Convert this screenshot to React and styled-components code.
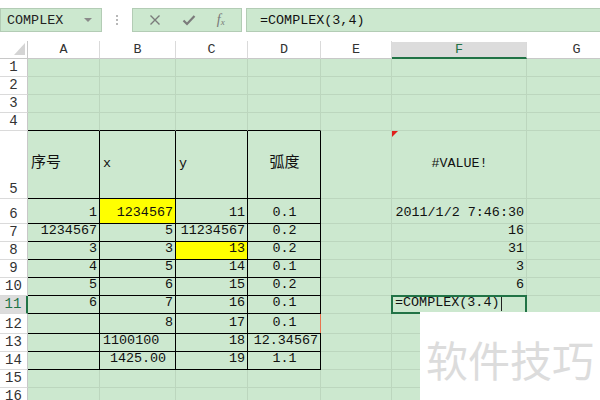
import styled, { createGlobalStyle } from "styled-components";

const GlobalStyle = createGlobalStyle`
  html, body {
    margin: 0;
    padding: 0;
    background: #ffffff;
    overflow: hidden;
  }
`;

const GREEN = "#cce8cf";
const GRID = "#bcd6be";
const HEAD_LINE = "#dadada";
const ACCENT = "#217346";
const FONT = `"Liberation Mono", "Noto Sans CJK SC", monospace`;

const Page = styled.div`
  position: relative;
  width: 600px;
  height: 400px;
  overflow: hidden;
  font-family: ${FONT};
  font-size: 13.4px;
  color: #111;
`;

const Toolbar = styled.div`
  display: flex;
  align-items: flex-start;
  height: 41px;
  padding-top: 8px;
  box-sizing: border-box;
  background: #fff;
`;

const Box = styled.div`
  display: flex;
  align-items: center;
  height: 24px;
  box-sizing: border-box;
  background: ${GREEN};
  border: 1px solid #b3ccb5;
`;

const NameBox = styled(Box)`
  width: 102px;
  padding: 0 6px;
  justify-content: space-between;
  color: #222;
`;

const Caret = styled.span`
  width: 0;
  height: 0;
  border-left: 4px solid transparent;
  border-right: 4px solid transparent;
  border-top: 4px solid #8a8a8a;
  margin-right: 3px;
`;

const Dots = styled.div`
  width: 30px;
  height: 24px;
  display: flex;
  flex-direction: column;
  align-items: center;
  justify-content: center;
  gap: 2px;
  span {
    width: 2px;
    height: 2px;
    background: #b8b8b8;
  }
`;

const FxBox = styled(Box)`
  width: 110px;
  justify-content: space-around;
  padding: 0 6px;
  color: #7b7b7b;
`;

const Fx = styled.span`
  font-family: "Liberation Serif", serif;
  font-style: italic;
  font-size: 14px;
  color: #777;
  sub {
    font-size: 9px;
    vertical-align: -1px;
  }
`;

const FormulaBox = styled(Box)`
  flex: 1;
  margin-left: 4px;
  margin-right: -2px;
  padding-left: 13px;
  color: #111;
`;

const Sheet = styled.div`
  display: grid;
  grid-template-columns: 28px 72px 76px 72px 73px 71px 135px 100px;
  grid-template-rows: 18px ${(p) => p.$rows};
`;

const Corner = styled.div`
  position: relative;
  border-right: 1px solid #c8c8c8;
  border-bottom: 1px solid #c8c8c8;
  box-sizing: border-box;
  background: #fff;
  &::after {
    content: "";
    position: absolute;
    right: 2px;
    bottom: 3px;
    border-left: 11px solid transparent;
    border-bottom: 12px solid #d4d4d4;
  }
`;

const ColHead = styled.div`
  display: flex;
  align-items: center;
  justify-content: center;
  box-sizing: border-box;
  background: ${(p) => (p.$active ? "#dcdcdc" : "#fff")};
  color: ${(p) => (p.$active ? ACCENT : "#333")};
  border-right: 1px solid ${HEAD_LINE};
  border-bottom: ${(p) => (p.$active ? `2px solid ${ACCENT}` : "1px solid #c8c8c8")};
  margin-top: ${(p) => (p.$active ? "1px" : "0")};
`;

const RowHead = styled.div`
  display: flex;
  align-items: flex-end;
  justify-content: center;
  box-sizing: border-box;
  padding-bottom: 1px;
  line-height: 16px;
  font-size: 14px;
  background: ${(p) => (p.$active ? "#dcdcdc" : "#fff")};
  color: ${(p) => (p.$active ? ACCENT : "#333")};
  border-bottom: 1px solid ${HEAD_LINE};
  border-right: ${(p) => (p.$active ? `2px solid ${ACCENT}` : "1px solid #c8c8c8")};
`;

const Cell = styled.div`
  position: relative;
  display: flex;
  align-items: ${(p) => (p.$middle ? "center" : "flex-end")};
  justify-content: ${(p) =>
    p.$align === "left" ? "flex-start" : p.$align === "center" ? "center" : "flex-end"};
  box-sizing: border-box;
  padding: 0 2px 2px 3px;
  line-height: 16px;
  white-space: nowrap;
  background: ${(p) => p.$bg || GREEN};
  border-right: 1px solid ${(p) => p.$br || GRID};
  border-bottom: 1px solid ${(p) => p.$bb || GRID};
  font-size: ${(p) => (p.$cjk ? "15px" : "13.4px")};

  &::before {
    content: "";
    display: ${(p) => (p.$note ? "block" : "none")};
    position: absolute;
    left: 0;
    top: 0;
    border-top: 6px solid #e0201c;
    border-right: 6px solid transparent;
  }

  &::after {
    content: "";
    display: ${(p) => (p.$selected ? "block" : "none")};
    position: absolute;
    left: -1px;
    top: -1px;
    right: -1px;
    bottom: -1px;
    border: 2px solid ${ACCENT};
    pointer-events: none;
  }
`;

const Marker = styled.span`
  position: absolute;
  right: -2px;
  top: 0;
  width: 2px;
  height: 100%;
  background: #e8734f;
`;

const Caret2 = styled.span`
  display: inline-block;
  width: 1px;
  height: 14px;
  margin-left: 2px;
  background: #222;
`;

const Watermark = styled.div`
  position: absolute;
  left: 420px;
  top: 312px;
  width: 180px;
  height: 88px;
  background: #fff;
  display: flex;
  align-items: center;
  justify-content: center;
  padding-top: 4px;
  box-sizing: border-box;
  font-family: "Noto Sans CJK SC", sans-serif;
  font-size: 42px;
  color: #dcdcdc;
  letter-spacing: 0;
`;

const cols = ["A", "B", "C", "D", "E", "F", "G"];
const heights = [18, 18, 18, 18, 68, 25, 18, 18, 18, 18, 18, 20, 18, 18, 18, 18];

const data = {
  5: {
    A: { t: "序号", a: "left", cjk: true },
    B: { t: "x", a: "left" },
    C: { t: "y", a: "left" },
    D: { t: "弧度", a: "center", cjk: true },
    F: { t: "#VALUE!", a: "center", note: true },
  },
  6: {
    A: { t: "1" },
    B: { t: "1234567", bg: "#ffff00" },
    C: { t: "11" },
    D: { t: "0.1", a: "center" },
    F: { t: "2011/1/2 7:46:30" },
  },
  7: { A: { t: "1234567" }, B: { t: "5" }, C: { t: "11234567" }, D: { t: "0.2", a: "center" }, F: { t: "16" } },
  8: { A: { t: "3" }, B: { t: "3" }, C: { t: "13", bg: "#ffff00" }, D: { t: "0.2", a: "center" }, F: { t: "31" } },
  9: { A: { t: "4" }, B: { t: "5" }, C: { t: "14" }, D: { t: "0.1", a: "center" }, F: { t: "3" } },
  10: { A: { t: "5" }, B: { t: "6" }, C: { t: "15" }, D: { t: "0.2", a: "center" }, F: { t: "6" } },
  11: {
    A: { t: "6" },
    B: { t: "7" },
    C: { t: "16" },
    D: { t: "0.1", a: "center" },
    F: { t: "=COMPLEX(3.4)", a: "left", selected: true, editing: true },
  },
  12: { B: { t: "8" }, C: { t: "17" }, D: { t: "0.1", a: "center", mark: true } },
  13: { B: { t: "1100100", a: "left" }, C: { t: "18" }, D: { t: "12.34567" } },
  14: { B: { t: "1425.00", a: "center" }, C: { t: "19" }, D: { t: "1.1", a: "center" } },
};

const inTable = (r, c) => r >= 5 && r <= 14 && c <= 3;

const App = () => {
  return (
    <Page>
      <GlobalStyle />
      <Toolbar>
        <NameBox>
          COMPLEX
          <Caret />
        </NameBox>
        <Dots>
          <span />
          <span />
          <span />
        </Dots>
        <FxBox>
          <svg width="12" height="12" viewBox="0 0 12 12">
            <path d="M1.5 1.5 L10.5 10.5 M10.5 1.5 L1.5 10.5" stroke="#7b7b7b" strokeWidth="1.4" />
          </svg>
          <svg width="14" height="12" viewBox="0 0 14 12">
            <path d="M1.5 6.5 L5 10 L12.5 2" stroke="#7b7b7b" strokeWidth="2.2" fill="none" />
          </svg>
          <Fx>
            f<sub>x</sub>
          </Fx>
        </FxBox>
        <FormulaBox>=COMPLEX(3,4)</FormulaBox>
      </Toolbar>

      <Sheet $rows={heights.map((h) => `${h}px`).join(" ")}>
        <Corner />
        {cols.map((c) => (
          <ColHead key={c} $active={c === "F"}>
            {c}
          </ColHead>
        ))}
        {heights.map((h, i) => {
          const r = i + 1;
          const row = data[r] || {};
          return [
            <RowHead key={`h${r}`} $active={r === 11}>
              {r}
            </RowHead>,
            ...cols.map((c, ci) => {
              const d = row[c] || {};
              const black = inTable(r, ci) || (r === 4 && ci <= 3);
              return (
                <Cell
                  key={`${c}${r}`}
                  $align={d.a}
                  $bg={d.bg}
                  $cjk={d.cjk}
                  $middle={r === 5}
                  $note={d.note}
                  $selected={d.selected}
                  $br={inTable(r, ci) ? "#000" : undefined}
                  $bb={black ? "#000" : undefined}
                >
                  {d.t}
                  {d.editing && <Caret2 />}
                  {d.mark && <Marker />}
                </Cell>
              );
            }),
          ];
        })}
      </Sheet>

      <Watermark>软件技巧</Watermark>
    </Page>
  );
};

export default App;
